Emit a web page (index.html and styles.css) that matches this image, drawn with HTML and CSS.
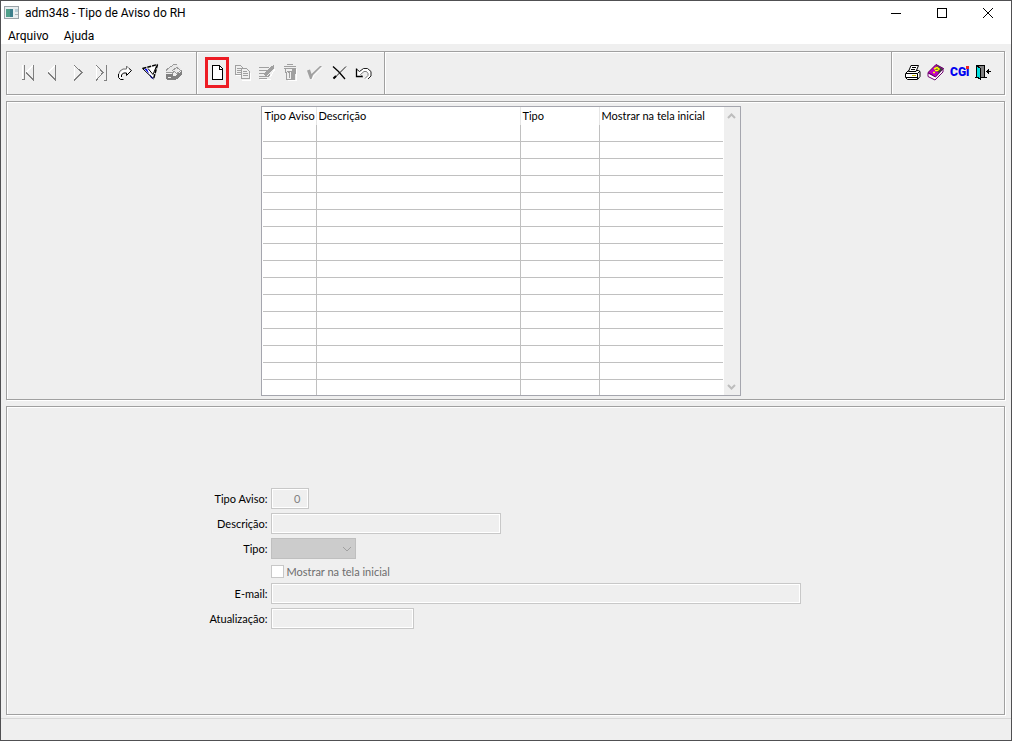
FILE: index.html
```html
<!DOCTYPE html>
<html lang="pt-BR">
<head>
<meta charset="utf-8">
<title>adm348 - Tipo de Aviso do RH</title>
<link rel="stylesheet" href="styles.css">
</head>
<body>
<div class="window">
  <header class="titlebar">
    <svg class="app-icon" viewBox="0 0 16 14" aria-hidden="true">
      <rect x="0.5" y="0.5" width="14" height="12" fill="#e9eef0" stroke="#9aa3a8"/>
      <rect x="2" y="3" width="7" height="8" fill="#3c7f8c"/>
      <rect x="2" y="3" width="4" height="8" fill="#4fa08a"/>
      <rect x="11" y="3" width="3" height="3" fill="#b9cfd8"/>
      <path d="M11 8.5h3" stroke="#a9b5ba"/>
    </svg>
    <h1 class="title">adm348 - Tipo de Aviso do RH</h1>
    <div class="window-buttons">
      <button class="window-button" aria-label="Minimizar"><svg viewBox="0 0 12 12"><path d="M1 6.5h10"/></svg></button>
      <button class="window-button" aria-label="Maximizar"><svg viewBox="0 0 12 12"><path d="M1.5 1.5h9v9h-9z"/></svg></button>
      <button class="window-button" aria-label="Fechar"><svg class="smooth" viewBox="0 0 12 12"><path d="M1 1l10 10M11 1L1 11"/></svg></button>
    </div>
  </header>
  <nav class="menu">
    <button class="menu-item">Arquivo</button>
    <button class="menu-item">Ajuda</button>
  </nav>
  <main class="content">
    <div class="toolbar etched">
      <div class="tool-group">
        <button class="tool" aria-label="Primeiro"><svg viewBox="0 0 24 24"><path d="M6.5 5v15M10 12.5L17 5.5" stroke="#fff"/><path d="M8.5 5v15M6 19.5h3M17.5 5v16M10 12.5l8 8" stroke="#808080"/></svg></button>
        <button class="tool" aria-label="Anterior"><svg viewBox="0 0 24 24"><path d="M8 12.5L15 5.5" stroke="#fff"/><path d="M15.5 5v16M8 12.5l8 8" stroke="#808080"/></svg></button>
        <button class="tool" aria-label="Próximo"><svg viewBox="0 0 24 24"><path d="M10.5 5v15" stroke="#fff"/><path d="M10 5l8 7.5l-8 8" stroke="#808080"/></svg></button>
        <button class="tool" aria-label="Último"><svg viewBox="0 0 24 24"><path d="M8.5 5v15" stroke="#fff"/><path d="M8 5l7 7.5l-7 8M18.5 5v15.5h-3" stroke="#808080"/></svg></button>
        <button class="tool" aria-label="Atualizar"><svg class="smooth" viewBox="0 0 24 24"><path d="M7 17l1-4 3-3h3V6l5 4.500-5 4.500v-2.500h-3l-2 2 1 4z" fill="#fff"/><path d="M14.500 9h-3.500l-3 2-1.500 3.500M14.500 9V6l2.500 2.500" stroke="#707070"/><path d="M17 8.500l2.500 2-5 5v-2.500h-3l-2 2v2M6.500 14v3.500l2 2h3" stroke="#000"/></svg></button>
        <button class="tool" aria-label="Filtrar"><svg class="smooth" viewBox="0 0 24 24"><path d="M6.500 8.500L21.500 4.500 17.500 19z" fill="#fff"/><path d="M8 8.500l3 .5 4 9 3 1z" fill="#0000f0"/><path d="M6.500 8.500l15-4M21.500 4.500l-4 14.500" stroke="#000" stroke-width="1.500" stroke-dasharray="4 1"/><path d="M6.500 8.500l11 10.500M12 8.500l5 6L20.500 6" stroke="#000"/></svg></button>
        <button class="tool" aria-label="Arquivar"><svg viewBox="0 0 24 24"><path d="M6 14h7v2h2l7-5v4l-2 1-3 3-3 1H7l-1-1z" fill="#808080"/><path d="M8 17.500h3" stroke="#efefef"/><path d="M6 10l8-5h3l5 4-4 1-3 3-3-2-5 2H6z" fill="#e8e8e8"/><path d="M6 10.500l2-2 6-4h3M12 10.500l5-3 4 3-4 3-3-2-2 2M6 12.500h6" stroke="#9a9a9a"/></svg></button>
      </div>
      <div class="tool-group">
        <button class="tool highlighted" aria-label="Novo"><svg viewBox="0 0 24 24"><path d="M7.500 5.500h7l3 3v11h-10z" fill="#fff" stroke="#000"/><path d="M14.500 5v4h3" fill="none" stroke="#000"/></svg></button>
        <button class="tool" aria-label="Copiar" disabled><svg viewBox="0 0 24 24"><path d="M7 15.500h5M13 20.500h8v-8" stroke="#fff"/><path d="M6.500 5.500h5l3 3v6h-8zM8 8.500h4M8 10.500h5M8 12.500h5" stroke="#a0a0a0"/><path d="M12.500 8.500h5l3 3v7h-8z" fill="#efefef" stroke="#a0a0a0"/><path d="M14 11.500h4M14 13.500h5M14 15.500h5" stroke="#a0a0a0"/></svg></button>
        <button class="tool" aria-label="Editar" disabled><svg viewBox="0 0 24 24"><path d="M7 19.500h11M17 17l5-8" stroke="#fff"/><path d="M6 7.500h10M6 10.500h8M6 13.500h6M6 16.500h10M6 18.500h8" stroke="#a0a0a0" stroke-width="1.500"/><path d="M11 15l1-3 6-6 3-1v3l-7 7z" fill="#a0a0a0"/><path d="M12 15l3 2 2-3" stroke="#a0a0a0"/></svg></button>
        <button class="tool" aria-label="Excluir" disabled><svg viewBox="0 0 24 24"><path d="M19.500 9v11.500h-9" stroke="#fff"/><path d="M7 6.500h12M7 8.500h12M10 4.500h6" stroke="#a0a0a0"/><path d="M8.500 9v4M9.500 12v7.500h8l1-11M12.500 18v-5l-2-2h4v8" stroke="#a0a0a0"/><path d="M15 9h3l-1 10h-2z" fill="#a0a0a0"/></svg></button>
        <button class="tool" aria-label="Confirmar" disabled><svg class="smooth" viewBox="0 0 24 24"><path d="M11 19.500l2-4 8-8" stroke="#fff"/><path d="M6 10.500l3-1 1.500 4.500L19 6h2l-9 9-1.500 4H9z" fill="#a0a0a0"/></svg></button>
        <button class="tool" aria-label="Cancelar"><svg class="smooth" viewBox="0 0 24 24"><path d="M8 6.500l5.500 5 6.500 7.500" stroke="#000" stroke-width="1.300"/><path d="M21 6.500L9 18.500" stroke="#202020"/><path d="M8.500 18.500l2.500-2.500" stroke="#000" stroke-width="2"/></svg></button>
        <button class="tool" aria-label="Desfazer"><svg class="smooth" viewBox="0 0 24 24"><path d="M7.500 9v7.500h6l-2-2 3-3h3l2 2v2l-3 3.500 1 .5 4.500-4v-4l-3-3h-4l-4 3z" fill="#fff"/><path d="M7.500 8.500v8h6.500" stroke="#000" stroke-width="1.300"/><path d="M8 9.500l2.500 2 4-3h4l3.500 3v4.500l-3 3" stroke="#202020"/><path d="M13.500 16.500l-2-2 3.500-3h2.500l1.500 2v2l-3 3" stroke="#808080"/></svg></button>
      </div>
      <div class="tool-group spacer"></div>
      <div class="tool-group">
        <button class="tool" aria-label="Imprimir"><svg class="smooth" viewBox="0 0 24 24"><path d="M5.500 13.500l3-3h10l1.500 1v5l-2.500 3h-10l-2-2z" fill="#fff" stroke="#000"/><path d="M8.500 11.500l2.500-6h7.500l-2.500 6z" fill="#fff" stroke="#000"/><path d="M12 7.500h4M11 9.500h4M6 13.500h11.500l2.500-2.500M17.500 13.500v5.500M6 17.500h11" stroke="#000"/><path d="M12 15.500h4" stroke="#d0c000"/></svg></button>
        <button class="tool" aria-label="Ajuda"><svg class="smooth" viewBox="0 0 24 24"><path d="M4 13v3.500l7 3.500 8-8V8.500l-8 8z" fill="#fff" stroke="#700070"/><path d="M4 12.500l8-8 7.500 4-8 8.500z" fill="#c000c0" stroke="#600060"/><path d="M12.500 5.500l6.500 3.500-4 4-4-3z" fill="#404040"/><path d="M10 9l3-1.500 2 1.500-1.500 1.500H11M9 12.500h2" stroke="#ffff00" stroke-width="1.500"/></svg></button>
        <button class="tool" aria-label="CGI"><svg viewBox="0 0 24 24"><text class="cgi" x="2" y="16">CGi</text><path d="M18 6h3v3h-3z" fill="#f02020"/></svg></button>
        <button class="tool" aria-label="Sair"><svg viewBox="0 0 24 24"><path d="M5.500 5.500h7v12h-7z" fill="#808080" stroke="#000"/><path d="M5 6l3 2v11l-3-2z" fill="#00e0e0"/><path d="M4.500 5v13M5 6l3 2v11l-3-2M3 17.500h3M8 17.500h7" stroke="#000"/><path d="M14 11.500h5M16.500 9v5M15.500 10v3" stroke="#000"/></svg></button>
      </div>
    </div>

    <section class="list-panel etched">
      <div class="grid">
        <table class="records">
          <colgroup><col class="col-code"><col class="col-description"><col class="col-type"><col class="col-show"></colgroup>
          <thead><tr><th>Tipo Aviso</th><th>Descrição</th><th>Tipo</th><th>Mostrar na tela inicial</th></tr></thead>
          <tbody>
            <tr><td></td><td></td><td></td><td></td></tr>
            <tr><td></td><td></td><td></td><td></td></tr>
            <tr><td></td><td></td><td></td><td></td></tr>
            <tr><td></td><td></td><td></td><td></td></tr>
            <tr><td></td><td></td><td></td><td></td></tr>
            <tr><td></td><td></td><td></td><td></td></tr>
            <tr><td></td><td></td><td></td><td></td></tr>
            <tr><td></td><td></td><td></td><td></td></tr>
            <tr><td></td><td></td><td></td><td></td></tr>
            <tr><td></td><td></td><td></td><td></td></tr>
            <tr><td></td><td></td><td></td><td></td></tr>
            <tr><td></td><td></td><td></td><td></td></tr>
            <tr><td></td><td></td><td></td><td></td></tr>
            <tr><td></td><td></td><td></td><td></td></tr>
            <tr><td></td><td></td><td></td><td></td></tr>
            <tr class="last"><td></td><td></td><td></td><td></td></tr>
          </tbody>
        </table>
        <div class="scrollbar">
          <button class="scroll-button" aria-label="Rolar para cima" disabled><svg viewBox="0 0 16 17"><path d="M4 11l3.500-3.500 3.500 3.500"/></svg></button>
          <button class="scroll-button" aria-label="Rolar para baixo" disabled><svg viewBox="0 0 16 17"><path d="M4 7l3.500 3.500 3.500-3.500"/></svg></button>
        </div>
      </div>
    </section>

    <section class="form-panel etched">
      <form class="form">
        <label for="code">Tipo Aviso:</label>
        <input class="field code" id="code" type="text" value="0" disabled>
        <label for="description">Descrição:</label>
        <input class="field description" id="description" type="text" disabled>
        <label for="type">Tipo:</label>
        <div class="select-wrap">
          <select class="field type" id="type" disabled><option></option></select>
          <svg class="select-arrow" viewBox="0 0 10 6" aria-hidden="true"><path d="M1 1l4 4 4-4"/></svg>
        </div>
        <div class="check-row">
          <input class="check" id="show" type="checkbox" disabled>
          <label for="show">Mostrar na tela inicial</label>
        </div>
        <label for="email">E-mail:</label>
        <input class="field email" id="email" type="text" disabled>
        <label for="updated">Atualização:</label>
        <input class="field updated" id="updated" type="text" disabled>
      </form>
    </section>
  </main>
  <footer class="status"></footer>
</div>
</body>
</html>
```
FILE: styles.css
```css
* { box-sizing: border-box; }

body {
  margin: 0;
  font-family: Lato, "Liberation Sans", sans-serif;
  font-size: 11px;
  color: #000;
}

button {
  padding: 0;
  border: 0;
  background: none;
  color: inherit;
  font: inherit;
}

svg { display: block; fill: none; shape-rendering: crispEdges; }
.smooth { shape-rendering: auto; }

.window {
  display: flex;
  flex-direction: column;
  min-height: 100vh;
  border: 1px solid #505052;
  background: #efefef;
}

.titlebar {
  display: flex;
  align-items: center;
  height: 24px;
  padding-left: 3px;
  background: #fff;
  font-family: Roboto, "Open Sans", sans-serif;
}

.app-icon { width: 16px; height: 14px; }

.title {
  flex: 1;
  margin: 0 0 0 5px;
  font-size: 12px;
  font-weight: 400;
}

.window-buttons { display: flex; }

.window-button {
  display: grid;
  place-items: center;
  width: 46px;
  height: 24px;
}

.window-button svg { width: 12px; height: 12px; stroke: #000; }

.menu {
  display: flex;
  gap: 15px;
  height: 19px;
  padding: 4px 0 0 7px;
  background: #fff;
  font-family: Roboto, "Open Sans", sans-serif;
  font-size: 12px;
}

.menu-item { height: 15px; line-height: 15px; }

.content {
  display: flex;
  flex: 1;
  flex-direction: column;
  padding: 7px 6px 3px 5px;
}

.etched {
  border: 1px solid #a0a0a0;
  box-shadow: inset 1px 1px #fff, 1px 1px #fff;
}

.toolbar { display: flex; height: 44px; }

.tool-group {
  display: flex;
  align-items: center;
  padding: 0 11px 2px 8px;
  border-right: 1px solid #a0a0a0;
  box-shadow: 1px 0 #fff;
}

.tool-group:first-child { padding-left: 9px; padding-right: 12px; }
.tool-group:last-child { padding-left: 8px; padding-right: 8px; border: 0; box-shadow: none; }
.tool-group.spacer { flex: 1; }

.tool {
  display: grid;
  place-items: center;
  width: 24px;
  height: 31px;
}

.tool svg { width: 24px; height: 24px; }
.tool.highlighted { box-shadow: inset 0 0 0 3px #ed1c24; }

.cgi {
  fill: #0000f0;
  font-family: Roboto, "Liberation Sans", sans-serif;
  font-size: 12px;
  font-weight: 900;
}

.list-panel {
  display: flex;
  justify-content: center;
  margin-top: 6px;
  padding: 4px 10px 3px 0;
}

.grid {
  display: flex;
  width: 480px;
  padding-left: 1px;
  border: 1px solid #a5a6ae;
  background: #fff;
}

.records {
  flex: 1;
  table-layout: fixed;
  border-collapse: separate;
  border-spacing: 0;
}

.col-code { width: 54px; }
.col-description { width: 204px; }
.col-type { width: 79px; }

.records th {
  height: 18px;
  padding: 0 0 0 2px;
  border-right: 1px solid #e6e6e6;
  font-weight: 400;
  line-height: 18px;
  text-align: left;
  white-space: nowrap;
}

.records td {
  height: 17px;
  padding: 0;
  border-right: 1px solid #c0c0c0;
  border-bottom: 1px solid #c0c0c0;
}

.records th:last-child, .records td:last-child { border-right: 0; }
.records .last td { height: 15px; border-bottom: 0; }

.scrollbar {
  display: flex;
  flex-direction: column;
  justify-content: space-between;
  width: 16px;
  margin-left: 1px;
  background: #efefef;
}

.scroll-button svg { width: 16px; height: 17px; stroke: #bdbdbd; stroke-width: 2; shape-rendering: auto; }

.form-panel {
  display: flex;
  flex: 1;
  align-items: center;
  justify-content: center;
  margin-top: 6px;
  padding: 0 4px 4px 0;
}

.form {
  display: grid;
  grid-template-columns: 61px auto;
  column-gap: 3px;
  row-gap: 4px;
  align-items: center;
  justify-items: start;
}

.form > label { justify-self: end; }

.field {
  display: block;
  height: 21px;
  margin: 0;
  padding: 0 7px;
  border: 1px solid #c8c8c8;
  border-radius: 0;
  outline: 0;
  background: #efefef;
  box-shadow: inset 0 0 0 1px #fff;
  color: #808080;
  font: inherit;
}

.code { width: 38px; text-align: right; }
.description { width: 230px; }
.email { width: 530px; }
.updated { width: 143px; }

.type {
  width: 85px;
  appearance: none;
  border-color: #bfbfbf;
  background: #cccccc;
  box-shadow: none;
  opacity: 1;
}

.select-wrap { position: relative; }

.select-arrow {
  position: absolute;
  top: 8px;
  right: 4px;
  width: 10px;
  height: 6px;
  stroke: #a0a0a0;
  shape-rendering: auto;
  pointer-events: none;
}

.check-row {
  display: flex;
  grid-column: 2;
  gap: 3px;
  align-items: center;
  height: 16px;
  color: #6d6d6d;
}

.check {
  width: 13px;
  height: 13px;
  margin: 0;
  appearance: none;
  border: 1px solid #c8c8c8;
  background: #fff;
}

.status {
  height: 22px;
  border-top: 1px solid #d7d7d7;
}
```
